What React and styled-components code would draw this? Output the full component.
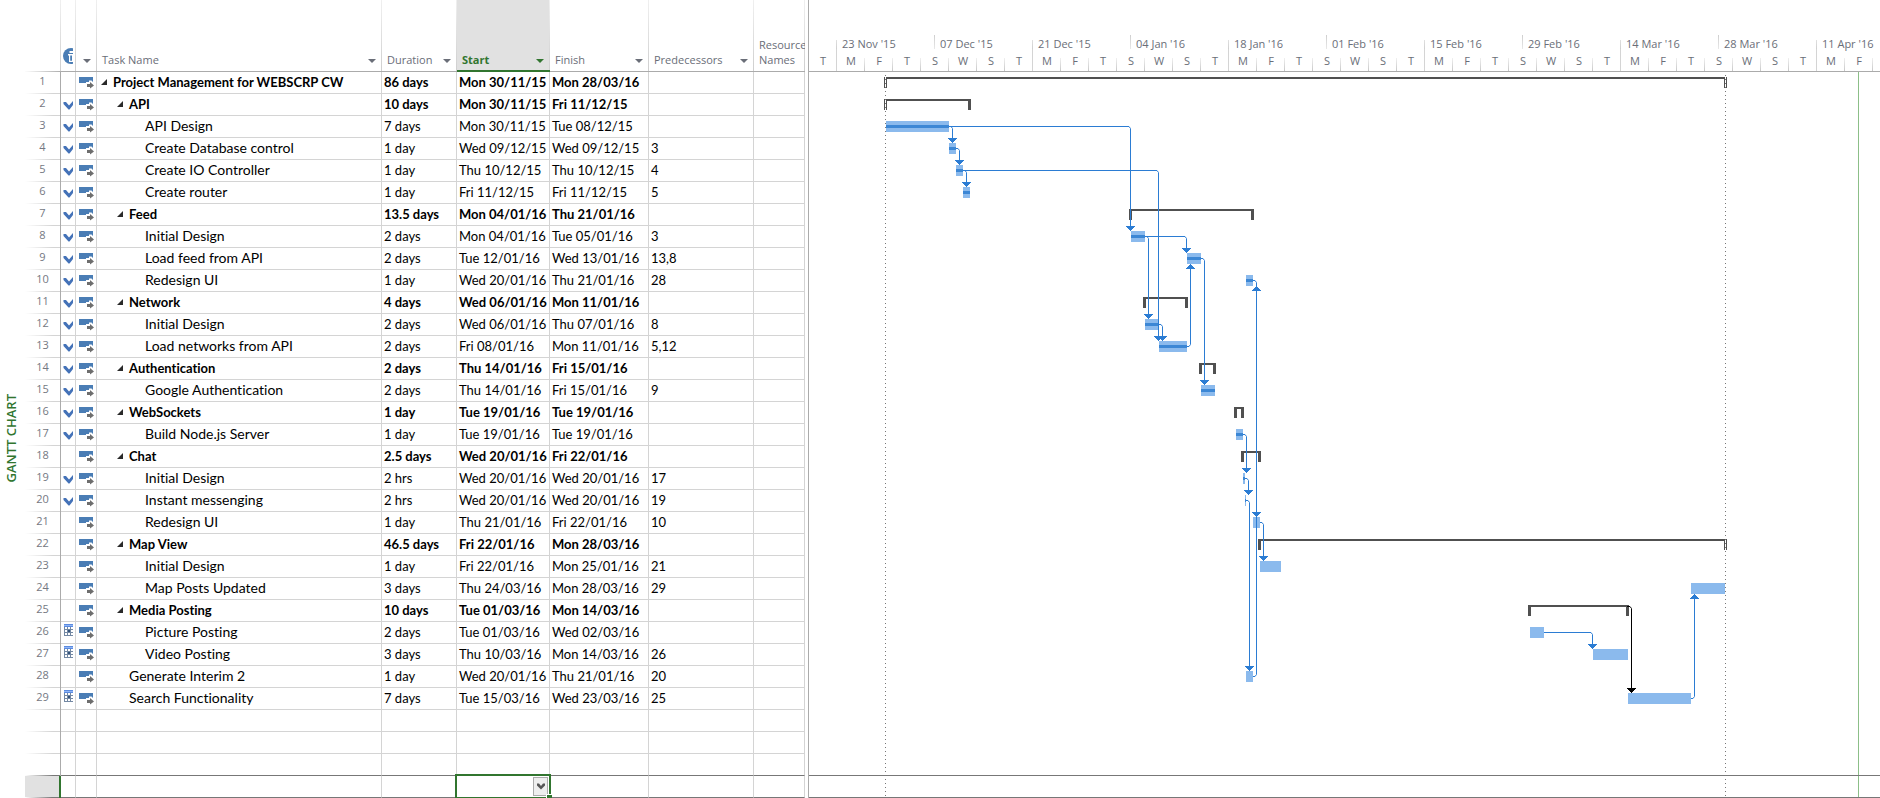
import React from "react";
import styled, { createGlobalStyle, css } from "styled-components";

const GREEN = "#31752f";
const GRID = "#d4d4d4";
const HEAD_LINE = "#ababab";
const DARK_LINE = "#777777";
const MUTED = "#6a6e78";
const ROW = 22;
const HEAD = 72;
const DAY = 7;
const ORIGIN = 28;

const Global = createGlobalStyle`
  *, *::before, *::after { box-sizing: border-box; }
  body { margin: 0; background: #fff; color: #000; font-family: Lato, "Liberation Sans", sans-serif; font-size: 13px; font-variant-ligatures: none; }
  button { margin: 0; padding: 0; border: 0; background: none; color: inherit; font: inherit; cursor: pointer; }
`;

const Page = styled.main`
  display: flex;
  min-height: 100vh;
  overflow: hidden;
`;

const Rail = styled.aside`
  flex: 0 0 25px;
  display: flex;
  align-items: center;
  justify-content: center;
  padding: 78px 3px 0 0;
`;

const RailTitle = styled.h1`
  margin: 0;
  writing-mode: vertical-rl;
  transform: rotate(180deg);
  white-space: nowrap;
  color: ${GREEN};
  font: 600 13px/16px "Open Sans", sans-serif;
`;

const Sheet = styled.section`
  flex: none;
  border-right: 1px solid ${HEAD_LINE};
  padding-right: 3px;
`;

const Table = styled.table`
  width: 780px;
  table-layout: fixed;
  border-collapse: separate;
  border-spacing: 0;
`;

const Head = styled.th`
  height: ${HEAD}px;
  padding: 0 5px 4px;
  vertical-align: bottom;
  text-align: left;
  overflow: hidden;
  color: ${MUTED};
  font: 400 11px/15px "Open Sans", sans-serif;
  border-bottom: 1px solid ${HEAD_LINE};
  background: linear-gradient(to bottom, #f0f0f0, #cfcfcf) right / 1px 100% no-repeat;
  ${(p) => p.$blank && css`
    border-image: linear-gradient(to right, #fff, ${HEAD_LINE}) 1;
  `}
  ${(p) => p.$tight && css`
    padding: 0 2px 7px;
    svg { display: block; }
  `}
  ${(p) => p.$active && css`
    color: ${GREEN};
    font-weight: 700;
    background-color: #e1e1e1;
    padding-bottom: 3px;
    border-bottom: 2px solid ${GREEN};
  `}
`;

const HeadInner = styled.div`
  display: flex;
  align-items: flex-end;
  justify-content: space-between;
`;

const FilterButton = styled.button`
  display: flex;
  margin-left: auto;
  padding: 4px 1px 4px 0;
`;

const Cell = styled.td`
  height: ${ROW}px;
  padding: 0 2px 1px;
  overflow: hidden;
  white-space: nowrap;
  line-height: 16px;
  font-weight: ${(p) => (p.$bold ? 700 : 400)};
  border-right: 1px solid ${GRID};
  border-bottom: 1px solid ${(p) => (p.$dark ? DARK_LINE : GRID)};
`;

const IconCell = styled(Cell)`
  padding: 0 0 0 2px;
  svg { display: block; }
`;

const NumberCell = styled.th`
  height: ${ROW}px;
  padding: 0 0 5px;
  text-align: center;
  color: #747882;
  font: 400 11px/16px "Open Sans", sans-serif;
  border-right: 1px solid ${HEAD_LINE};
  background: linear-gradient(to right, #fff, ${(p) => (p.$dark ? DARK_LINE : GRID)} 80%) bottom / 100% 1px no-repeat;
  ${(p) => p.$active && css`
    background-color: #e1e1e1;
    border-right: 2px solid ${GREEN};
  `}
`;

const TaskName = styled.span`
  display: flex;
  align-items: center;
  padding-left: ${(p) => p.$level * 16}px;
  font-size: ${(p) => (p.$bold ? 13 : 14)}px;
`;

const Toggle = styled.button`
  display: flex;
  width: 14px;
  padding-left: 2px;
`;

const ActiveCell = styled(Cell)`
  position: relative;
  overflow: visible;
`;

const Selection = styled.div`
  position: absolute;
  inset: -2px -2px -1px;
  display: flex;
  justify-content: flex-end;
  border: 2px solid ${GREEN};
  border-bottom-width: 1px;
  &::after {
    content: "";
    position: absolute;
    right: -3px;
    bottom: -1px;
    width: 6px;
    height: 4px;
    background: ${GREEN};
    border: solid #fff;
    border-width: 1px 0 0 1px;
  }
`;

const PickButton = styled.button`
  display: flex;
  align-items: center;
  justify-content: center;
  width: 15px;
  margin: 1px 1px 1px 0;
  border: 1px solid ${HEAD_LINE};
  background: #eeeeee;
`;

const Chart = styled.section`
  flex: 1 1 0;
  min-width: 0;
  overflow: hidden;
`;

const Scale = styled.header`
  height: ${HEAD}px;
  padding-top: 35px;
  overflow: hidden;
  border-bottom: 1px solid ${HEAD_LINE};
  color: ${MUTED};
  font: 400 11px/14px "Open Sans", sans-serif;
`;

const Tier = styled.div`
  display: flex;
  width: max-content;
`;

const Fortnights = styled(Tier)`
  padding-left: 27px;
`;

const Fortnight = styled.div`
  width: ${14 * DAY}px;
  height: 14px;
  padding: 2px 0 0 6px;
  white-space: nowrap;
  line-height: 14px;
  background: linear-gradient(to bottom, #cfcfcf, #e8e8e8) left / 1px 100% no-repeat;
  ${(p) => p.$major && css`
    background: linear-gradient(to bottom, #e0e0e0, #cfcfcf) left bottom / 1px 9px no-repeat;
  `}
`;

const DayCell = styled.div`
  width: ${4 * DAY}px;
  height: 22px;
  padding-top: 5px;
  text-align: center;
  line-height: 14px;
  background: linear-gradient(to bottom, #f0f0f0, #c8c8c8) right bottom / 1px 13px no-repeat;
  ${(p) => p.$major && css`
    background: linear-gradient(${GRID}, ${GRID}) right / 1px 100% no-repeat;
  `}
`;

const Plot = styled.svg`
  display: block;
  width: 100%;
  height: ${33 * ROW}px;
`;

const DownArrow = ({ fill = MUTED }) => (
  <svg width="8" height="4" viewBox="0 0 8 4" aria-hidden="true">
    <path d="M0 0h8L4 4z" fill={fill} />
  </svg>
);

const InfoIcon = () => (
  <svg width="10" height="16" viewBox="0 0 10 16" aria-hidden="true">
    <circle cx="8" cy="8" r="8" fill="#4a7db5" />
    <path d="M6.500 3h3.500v2H6.500zM5 6h5v8H6V7.500H5z" fill="#fff" />
    <path d="M7.200 7.500h1.800v5.300H7.200z" fill="#4a7db5" />
  </svg>
);

const CheckIcon = () => (
  <svg width="10" height="17" viewBox="0 0 10 17" aria-hidden="true">
    <path d="M0.500 6H3l3 3.500L10 5v4l-3.500 4.500H5.500L0.500 8z" fill="#4472b8" />
  </svg>
);

const CalendarIcon = () => (
  <svg width="10" height="17" viewBox="0 0 10 17" shapeRendering="crispEdges" aria-hidden="true">
    <path d="M1 0h9v12H1z" fill="#fff" />
    <path d="M1 0h9v3H1z" fill="#5b8be0" />
    <path d="M1 1h9v1H1z" fill="#8fb4f5" />
    <path d="M1 3h1v9H1zM4 3h1v9H4zM7 3h1v9H7zM1 5h9v1H1zM1 8h9v1H1zM1 11h9v1H1z" fill="#7388a3" />
    <path d="M5 6h2v2H5z" fill="#33527a" />
  </svg>
);

const ModeIcon = () => (
  <svg width="17" height="17" viewBox="0 0 17 17" aria-hidden="true">
    <path d="M1 3h14v6H1z" fill="#4a7db5" />
    <path d="M8 8h3V6.500h2.500L17 10v4H8z" fill="#fff" />
    <path d="M9 10h3V8l4 3.500-4 3V13H9z" fill="#6e6e6e" />
  </svg>
);

const Collapse = () => (
  <svg width="6" height="6" viewBox="0 0 6 6" aria-hidden="true">
    <path d="M6 0V6H0z" fill="#2a2a2a" />
  </svg>
);

const Chevron = () => (
  <svg width="8" height="7" viewBox="0 0 8 7" aria-hidden="true">
    <path d="M0 0.500h2L4 3l2-2.500h2v2L4 6.500 0 2.500z" fill="#555" />
  </svg>
);

// [name, level, duration, start, finish, predecessors, indicator]
const tasks = [
  ["Project Management for WEBSCRP CW", 0, "86 days", "Mon 30/11/15", "Mon 28/03/16", "", ""],
  ["API", 1, "10 days", "Mon 30/11/15", "Fri 11/12/15", "", "check"],
  ["API Design", 2, "7 days", "Mon 30/11/15", "Tue 08/12/15", "", "check"],
  ["Create Database control", 2, "1 day", "Wed 09/12/15", "Wed 09/12/15", "3", "check"],
  ["Create IO Controller", 2, "1 day", "Thu 10/12/15", "Thu 10/12/15", "4", "check"],
  ["Create router", 2, "1 day", "Fri 11/12/15", "Fri 11/12/15", "5", "check"],
  ["Feed", 1, "13.5 days", "Mon 04/01/16", "Thu 21/01/16", "", "check"],
  ["Initial Design", 2, "2 days", "Mon 04/01/16", "Tue 05/01/16", "3", "check"],
  ["Load feed from API", 2, "2 days", "Tue 12/01/16", "Wed 13/01/16", "13,8", "check"],
  ["Redesign UI", 2, "1 day", "Wed 20/01/16", "Thu 21/01/16", "28", "check"],
  ["Network", 1, "4 days", "Wed 06/01/16", "Mon 11/01/16", "", "check"],
  ["Initial Design", 2, "2 days", "Wed 06/01/16", "Thu 07/01/16", "8", "check"],
  ["Load networks from API", 2, "2 days", "Fri 08/01/16", "Mon 11/01/16", "5,12", "check"],
  ["Authentication", 1, "2 days", "Thu 14/01/16", "Fri 15/01/16", "", "check"],
  ["Google Authentication", 2, "2 days", "Thu 14/01/16", "Fri 15/01/16", "9", "check"],
  ["WebSockets", 1, "1 day", "Tue 19/01/16", "Tue 19/01/16", "", "check"],
  ["Build Node.js Server", 2, "1 day", "Tue 19/01/16", "Tue 19/01/16", "", "check"],
  ["Chat", 1, "2.5 days", "Wed 20/01/16", "Fri 22/01/16", "", ""],
  ["Initial Design", 2, "2 hrs", "Wed 20/01/16", "Wed 20/01/16", "17", "check"],
  ["Instant messenging", 2, "2 hrs", "Wed 20/01/16", "Wed 20/01/16", "19", "check"],
  ["Redesign UI", 2, "1 day", "Thu 21/01/16", "Fri 22/01/16", "10", ""],
  ["Map View", 1, "46.5 days", "Fri 22/01/16", "Mon 28/03/16", "", ""],
  ["Initial Design", 2, "1 day", "Fri 22/01/16", "Mon 25/01/16", "21", ""],
  ["Map Posts Updated", 2, "3 days", "Thu 24/03/16", "Mon 28/03/16", "29", ""],
  ["Media Posting", 1, "10 days", "Tue 01/03/16", "Mon 14/03/16", "", ""],
  ["Picture Posting", 2, "2 days", "Tue 01/03/16", "Wed 02/03/16", "", "calendar"],
  ["Video Posting", 2, "3 days", "Thu 10/03/16", "Mon 14/03/16", "26", "calendar"],
  ["Generate Interim 2", 1, "1 day", "Wed 20/01/16", "Thu 21/01/16", "20", ""],
  ["Search Functionality", 1, "7 days", "Tue 15/03/16", "Wed 23/03/16", "25", "calendar"],
];
const summaryIds = [1, 2, 7, 11, 14, 16, 18, 22, 25];

// Days counted from 23 Nov 2015: id -> [start, end, done]
const spans = {
  1: [7, 127], 2: [7, 19], 3: [7, 16, true], 4: [16, 17, true], 5: [17, 18, true], 6: [18, 19, true],
  7: [42, 59.4], 8: [42, 44, true], 9: [50, 52, true], 10: [58.4, 59.4, true], 11: [44, 50],
  12: [44, 46, true], 13: [46, 50, true], 14: [52, 54], 15: [52, 54, true], 16: [57, 58],
  17: [57, 58, true], 18: [58, 60.4], 19: [58, 58.3, true], 20: [58.3, 58.4, true], 21: [59.4, 60.4],
  22: [60.4, 127], 23: [60.4, 63.4], 24: [122, 126.9], 25: [99, 113], 26: [99, 101],
  27: [108, 113], 28: [58.4, 59.4], 29: [113, 122],
};

// [from, to, side whose edge the vertical run follows]
const links = [
  [3, 4, "from"], [4, 5, "from"], [5, 6, "from"], [3, 8, "to"], [5, 13, "to"], [8, 9, "to"],
  [8, 12, "from"], [12, 13, "from"], [13, 9, "from"], [9, 15, "from"], [28, 10, "from"],
  [10, 21, "from"], [17, 19, "from"], [19, 20, "from"], [20, 28, "from"], [21, 23, "from"],
  [26, 27, "to"], [25, 29, "from"], [29, 24, "from"],
];

const px = (day) => ORIGIN + Math.round(day * DAY);
const top = (id) => (id - 1) * ROW;

const Summary = ({ id }) => {
  const [a, b] = spans[id];
  const x1 = px(a) - 2;
  const x2 = px(b) + 1;
  const y = top(id) + 5;
  return (
    <g>
      <path d={`M${x1} ${y}H${x2}V${y + 11}H${x2 - 3}V${y + 2}H${x1 + 3}V${y + 11}H${x1}z`} fill="#505050" />
      {a === 7 && <rect x={x1 + 1} y={y} width="1" height="11" fill="#fff" />}
      {b === 127 && <rect x={x2 - 2} y={y} width="1" height="11" fill="#fff" />}
    </g>
  );
};

const Bar = ({ id }) => {
  const [a, b, done] = spans[id];
  const x = px(a);
  const w = px(b) - x;
  return (
    <g>
      <rect x={x} y={top(id) + 5} width={w} height="11" fill="#8bbaed" />
      {done && <rect x={x} y={top(id) + 9} width={w} height="3" fill="#3c87d5" />}
    </g>
  );
};

const Link = ({ from, to, side }) => {
  const summary = summaryIds.includes(from);
  const color = summary ? "#000000" : "#2b7cd3";
  const x = side === "from" ? px(spans[from][1]) + 3 : px(spans[to][0]) - 1;
  const y = top(from) + (summary ? 6 : 10);
  const down = to > from;
  const s = down ? 1 : -1;
  const tip = down ? top(to) + 5 : top(to) + 16;
  const steps = `M${x - 4} ${tip - 5 * s}h9v${s}h-1v${s}h-1v${s}h-1v${s}h-1v${s}h-1v${-s}h-1v${-s}h-1v${-s}h-1v${-s}h-1z`;
  return (
    <g>
      <path
        d={`M${px(spans[from][1]) - (summary ? 1 : 0)} ${y + 0.5}H${x - 1}L${x + 0.5} ${y + 0.5 + 2 * s}V${tip - 3 * s}`}
        fill="none"
        stroke={color}
      />
      <path d={steps} fill={color} shapeRendering="crispEdges" />
    </g>
  );
};

const fortnights = [
  "23 Nov '15", "07 Dec '15", "21 Dec '15", "04 Jan '16", "18 Jan '16", "01 Feb '16",
  "15 Feb '16", "29 Feb '16", "14 Mar '16", "28 Mar '16", "11 Apr '16",
];
const dayLetters = Array.from({ length: 38 }, (_, i) => "TMFTSWS"[i % 7]);
const columns = [
  { label: "Task Name" },
  { label: "Duration" },
  { label: "Start", active: true },
  { label: "Finish" },
  { label: "Predecessors" },
];
const widths = [36, 15, 21, 285, 75, 93, 99, 105, 51];

function TaskTable() {
  return (
    <Table>
      <colgroup>
        {widths.map((w, i) => <col key={i} width={w} />)}
      </colgroup>
      <thead>
        <tr>
          <Head $blank aria-label="Row" />
          <Head $tight aria-label="Indicators"><InfoIcon /></Head>
          <Head aria-label="Task Mode">
            <HeadInner><FilterButton aria-label="Filter Task Mode"><DownArrow /></FilterButton></HeadInner>
          </Head>
          {columns.map(({ label, active }) => (
            <Head key={label} scope="col" $active={active}>
              <HeadInner>
                {label}
                <FilterButton aria-label={`Filter ${label}`}>
                  <DownArrow fill={active ? GREEN : MUTED} />
                </FilterButton>
              </HeadInner>
            </Head>
          ))}
          <Head scope="col">Resource Names</Head>
        </tr>
      </thead>
      <tbody>
        {tasks.map(([name, level, duration, start, finish, pred, flag], i) => {
          const bold = summaryIds.includes(i + 1);
          return (
            <tr key={i}>
              <NumberCell scope="row">{i + 1}</NumberCell>
              <IconCell>{flag === "check" ? <CheckIcon /> : flag === "calendar" ? <CalendarIcon /> : null}</IconCell>
              <IconCell><ModeIcon /></IconCell>
              <Cell $bold={bold}>
                <TaskName $level={level} $bold={bold}>
                  <Toggle as={bold ? "button" : "span"} aria-label={bold ? `Collapse ${name}` : undefined}>
                    {bold && <Collapse />}
                  </Toggle>
                  {name}
                </TaskName>
              </Cell>
              <Cell $bold={bold}>{duration}</Cell>
              <Cell $bold={bold}>{start}</Cell>
              <Cell $bold={bold}>{finish}</Cell>
              <Cell>{pred}</Cell>
              <Cell />
            </tr>
          );
        })}
        {[0, 1, 2].map((r) => (
          <tr key={`blank${r}`}>
            <NumberCell $dark={r === 2} />
            {widths.slice(1).map((_, c) => <Cell key={c} $dark={r === 2} />)}
          </tr>
        ))}
        <tr>
          <NumberCell $active $dark />
          {[0, 1, 2, 3].map((c) => <Cell key={c} $dark />)}
          <ActiveCell $dark>
            <Selection>
              <PickButton aria-label="Choose start date"><Chevron /></PickButton>
            </Selection>
          </ActiveCell>
          {[0, 1, 2].map((c) => <Cell key={c} $dark />)}
        </tr>
      </tbody>
    </Table>
  );
}

function GanttChart() {
  return (
    <Chart aria-label="Gantt chart">
      <Scale>
        <Fortnights>
          {fortnights.map((f, i) => <Fortnight key={f} $major={i % 2 === 0}>{f}</Fortnight>)}
        </Fortnights>
        <Tier>
          {dayLetters.map((d, i) => <DayCell key={i} $major={i % 7 === 0}>{d}</DayCell>)}
        </Tier>
      </Scale>
      <Plot role="img" aria-label="Task bars and dependencies">
        {summaryIds.map((id) => <Summary key={id} id={id} />)}
        {Object.keys(spans).map(Number).filter((id) => !summaryIds.includes(id)).map((id) => <Bar key={id} id={id} />)}
        {links.map(([from, to, side]) => <Link key={`${from}-${to}`} from={from} to={to} side={side} />)}
        {[76.5, 916.5].map((x) => (
          <path key={x} d={`M${x} 3V726`} stroke="#777" strokeDasharray="1 3" />
        ))}
        <path d="M1049.500 0V726" stroke="#8cbf88" />
        <path d="M0 703.500H4000M0 725.500H4000" stroke={DARK_LINE} />
      </Plot>
    </Chart>
  );
}

export default function App() {
  return (
    <>
      <Global />
      <Page>
        <Rail><RailTitle>GANTT CHART</RailTitle></Rail>
        <Sheet><TaskTable /></Sheet>
        <GanttChart />
      </Page>
    </>
  );
}
